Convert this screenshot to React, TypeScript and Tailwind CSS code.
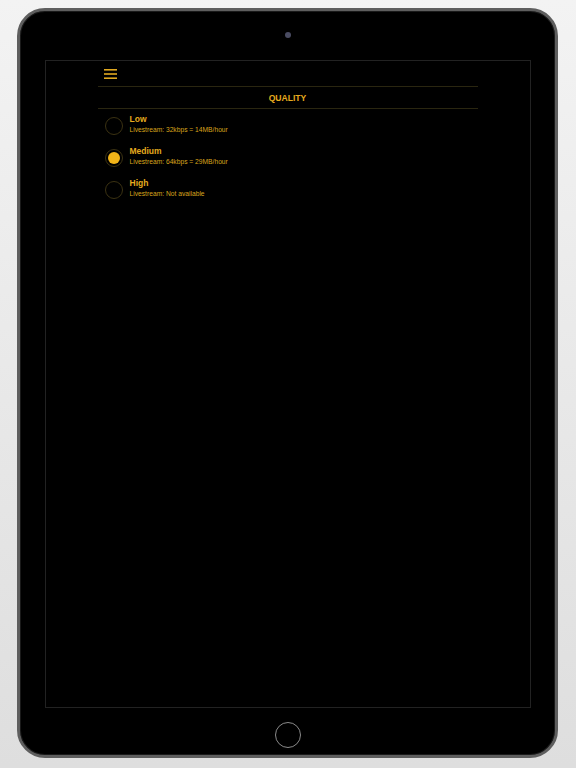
const options = [
  { name: 'Low', detail: 'Livestream: 32kbps = 14MB/hour', selected: false },
  { name: 'Medium', detail: 'Livestream: 64kbps = 29MB/hour', selected: true },
  { name: 'High', detail: 'Livestream: Not available', selected: false },
];

function Radio({ selected }: { selected: boolean }) {
  return (
    <div className="flex h-[18px] w-[18px] shrink-0 items-center justify-center rounded-full border border-[#3b3212]">
      {selected && <div className="h-[12px] w-[12px] rounded-full bg-[#f2b418]" />}
    </div>
  );
}

export default function App() {
  return (
    <div
      className="h-[768px] w-[576px] overflow-hidden bg-gradient-to-b from-[#f3f3f3] to-[#dedede] pl-[17px] pt-[8px]"
      style={{ fontFamily: '"Liberation Sans", Arial, sans-serif' }}
    >
      {/* tablet body */}
      <div className="flex h-[750px] w-[541px] flex-col items-center rounded-[28px] border-[3px] border-[#5e5e5e] bg-black shadow-[inset_0_0_0_1px_#1a1a1a]">
        <div className="mt-[21px] h-[6px] w-[6px] rounded-full bg-[#4a4c62]" />

        {/* screen */}
        <div className="mt-[22px] h-[648px] w-[486px] border border-[#222222] bg-black px-[52px]">
          <div className="flex h-[26px] items-center border-b border-[#2a2610] pl-[6px]">
            <svg width="13" height="10" viewBox="0 0 13 10">
              <rect x="0" y="0" width="13" height="1.6" fill="#e0a820" />
              <rect x="0" y="4.2" width="13" height="1.6" fill="#e0a820" />
              <rect x="0" y="8.4" width="13" height="1.6" fill="#e0a820" />
            </svg>
          </div>
          <div className="flex h-[22px] items-center justify-center border-b border-[#2a2610] pt-[2px] text-[8.6px] font-bold text-[#e6ab1e]">
            QUALITY
          </div>
          <div className="flex flex-col pt-[1px]">
            {options.map((o) => (
              <div key={o.name} className="flex h-[32px] items-center gap-[7px] pl-[7px]">
                <Radio selected={o.selected} />
                <div className="flex flex-col -mt-[3px]">
                  <span className="text-[8.5px] font-bold leading-[11px] text-[#e6ab1e]">{o.name}</span>
                  <span className="text-[6.7px] leading-[10px] text-[#d9a51c]">{o.detail}</span>
                </div>
              </div>
            ))}
          </div>
        </div>

        <div className="mt-[14px] h-[26px] w-[26px] rounded-full border-[1.5px] border-[#8a8a8a] bg-black" />
      </div>
    </div>
  );
}
